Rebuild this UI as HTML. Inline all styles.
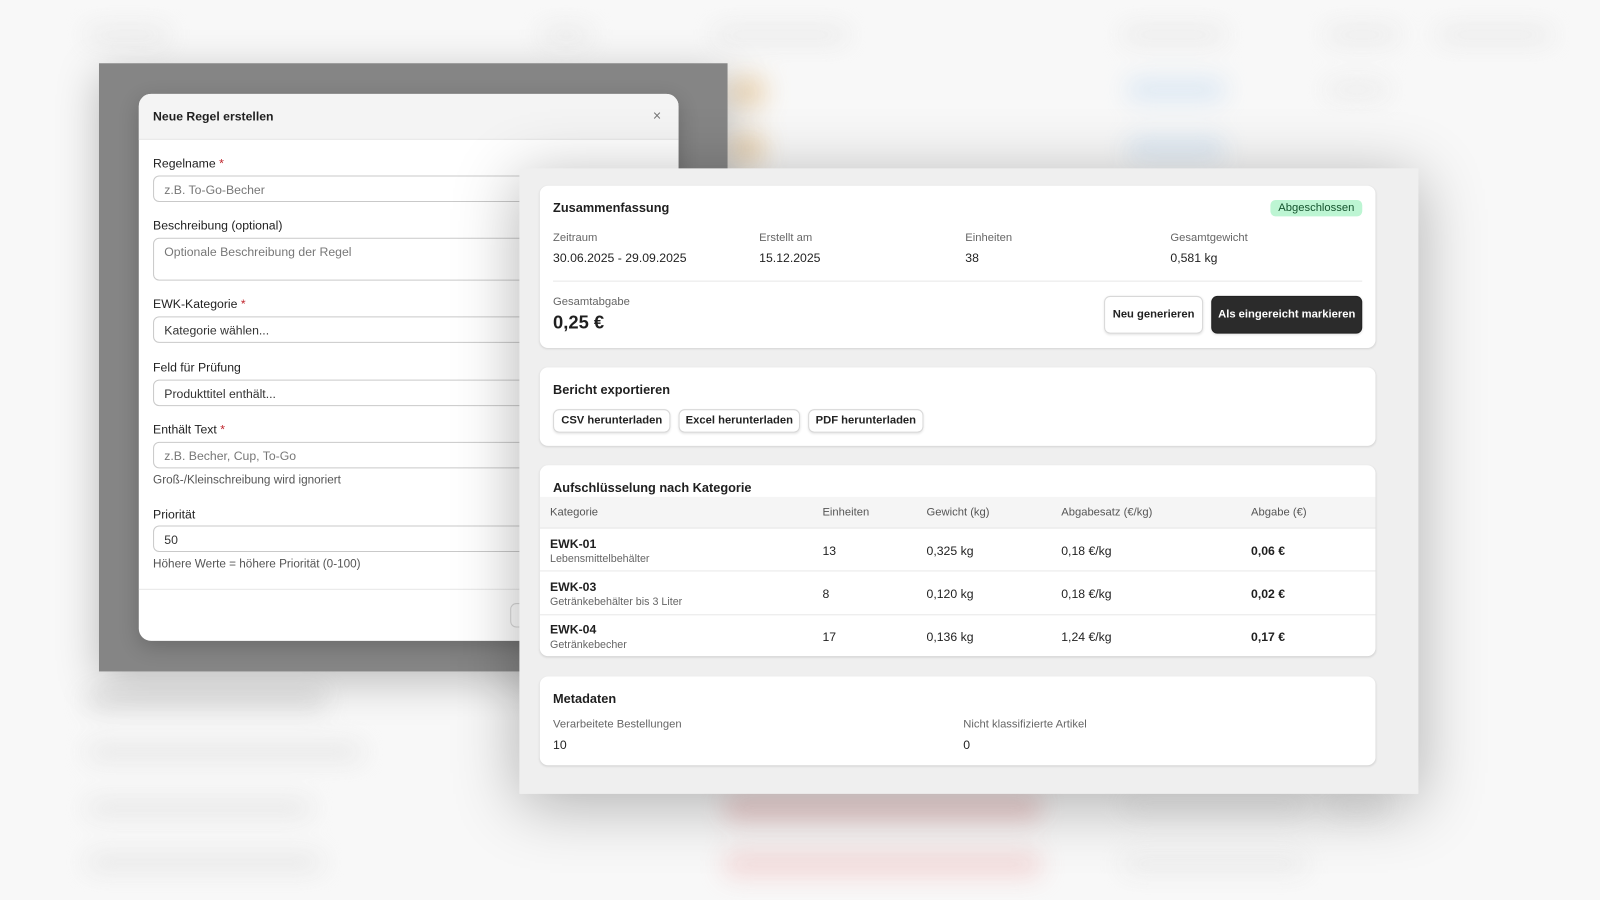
<!DOCTYPE html>
<html><head><meta charset="utf-8"><style>
*{box-sizing:border-box;margin:0;padding:0}
html,body{width:1600px;height:900px;overflow:hidden;background:#f8f8f8;font-family:"Liberation Sans",sans-serif;color:#1f1f1f}
#s{position:absolute;left:0;top:0;width:1568px;height:882px;transform:scale(1.02041);transform-origin:0 0}
.bg{position:absolute;inset:0;filter:blur(12px);opacity:.85}
.b{position:absolute;border-radius:6px}
.abs{position:absolute}
.ov{position:absolute;left:97px;top:62px;width:616px;height:596px;background:#858585;box-shadow:0 10px 40px rgba(0,0,0,.25)}
.modal{position:absolute;left:136px;top:92px;width:529px;height:536px;background:#fff;border-radius:12px;overflow:hidden;box-shadow:0 6px 20px rgba(0,0,0,.2)}
.mh{height:45px;background:#f4f4f4;border-bottom:1px solid #e6e6e6;padding:15px 14px;font-size:12px;font-weight:bold}
.x{position:absolute;right:17px;top:13px;font-size:14px;color:#777}
.lbl{position:absolute;left:14px;font-size:12px;color:#222}
.lbl i{color:#c0262d;font-style:normal}
.inp{position:absolute;left:14px;width:501px;height:26px;border:1px solid #c9c9c9;border-radius:6px;padding:6px 10px;font-size:12px;color:#333}
.ph{color:#777}
.hint{position:absolute;left:14px;font-size:11.5px;color:#555}
.panel{position:absolute;left:509px;top:165px;width:881px;height:613px;background:#efefef;box-shadow:0 10px 60px rgba(0,0,0,.3)}
.card{position:absolute;left:20px;width:819px;background:#fff;border-radius:8px;box-shadow:0 1px 2px rgba(0,0,0,.12)}
.t{position:absolute;font-size:12.5px;font-weight:bold;color:#1f1f1f}
.sl{position:absolute;font-size:11px;color:#666}
.sv{position:absolute;font-size:12px;color:#222}
.btn{position:absolute;border:1px solid #d8d8d8;border-radius:6px;background:#fff;font-size:11px;font-weight:bold;color:#222;text-align:center;box-shadow:0 1px 2px rgba(0,0,0,.1)}
</style></head><body><div id="s">
<div class="bg">
<div class="b" style="left:85px;top:28px;width:80px;height:12px;background:#e2e2e2"></div>
<div class="b" style="left:530px;top:28px;width:50px;height:12px;background:#e2e2e2"></div>
<div class="b" style="left:700px;top:28px;width:130px;height:12px;background:#e2e2e2"></div>
<div class="b" style="left:1100px;top:28px;width:100px;height:12px;background:#e2e2e2"></div>
<div class="b" style="left:1300px;top:28px;width:70px;height:12px;background:#e2e2e2"></div>
<div class="b" style="left:1410px;top:28px;width:110px;height:12px;background:#e2e2e2"></div>
<div class="b" style="left:715px;top:75px;width:35px;height:30px;background:#ecd2ac"></div>
<div class="b" style="left:715px;top:130px;width:35px;height:30px;background:#ecd2ac"></div>
<div class="b" style="left:1105px;top:78px;width:95px;height:20px;background:#d3e3f2"></div>
<div class="b" style="left:1105px;top:135px;width:95px;height:20px;background:#d3e3f2"></div>
<div class="b" style="left:1300px;top:82px;width:60px;height:12px;background:#e4e4e4"></div>
<div class="b" style="left:85px;top:678px;width:235px;height:16px;background:#d2d2d2"></div>
<div class="b" style="left:85px;top:730px;width:270px;height:14px;background:#e0e0e0"></div>
<div class="b" style="left:85px;top:785px;width:220px;height:14px;background:#e0e0e0"></div>
<div class="b" style="left:85px;top:838px;width:230px;height:14px;background:#e0e0e0"></div>
<div class="b" style="left:710px;top:780px;width:310px;height:24px;background:#ecc6c6"></div>
<div class="b" style="left:710px;top:835px;width:310px;height:24px;background:#f2d2d2"></div>
<div class="b" style="left:1100px;top:785px;width:180px;height:14px;background:#e6e6e6"></div>
<div class="b" style="left:1300px;top:785px;width:60px;height:14px;background:#e6e6e6"></div>
<div class="b" style="left:1100px;top:840px;width:180px;height:14px;background:#e6e6e6"></div>
</div>
<div class="ov"></div>
<div class="modal">
<div class="mh">Neue Regel erstellen</div><div class="x">×</div>
<div class="lbl" style="top:61px">Regelname <i>*</i></div>
<div class="inp" style="top:80px"><span class="ph">z.B. To-Go-Becher</span></div>
<div class="lbl" style="top:122px">Beschreibung (optional)</div>
<div class="inp" style="top:141px;height:42px"><span class="ph">Optionale Beschreibung der Regel</span></div>
<div class="lbl" style="top:199px">EWK-Kategorie <i>*</i></div>
<div class="inp" style="top:218px">Kategorie wählen...</div>
<div class="lbl" style="top:261px">Feld für Prüfung</div>
<div class="inp" style="top:280px">Produkttitel enthält...</div>
<div class="lbl" style="top:322px">Enthält Text <i>*</i></div>
<div class="inp" style="top:341px"><span class="ph">z.B. Becher, Cup, To-Go</span></div>
<div class="hint" style="top:373px">Groß-/Kleinschreibung wird ignoriert</div>
<div class="lbl" style="top:405px">Priorität</div>
<div class="inp" style="top:423px">50</div>
<div class="hint" style="top:455px">Höhere Werte = höhere Priorität (0-100)</div>
<div class="abs" style="left:0;top:485px;width:529px;border-top:1px solid #e6e6e6"></div>
<div class="abs" style="left:364px;top:499px;width:80px;height:24px;border:1px solid #d8d8d8;border-radius:6px"></div>
</div>
<div class="panel">
<div class="card" style="top:17px;height:159px">
<div class="t" style="left:13px;top:15px">Zusammenfassung</div>
<div class="abs" style="left:716px;top:14px;width:90px;height:16px;background:#bdf5d3;border-radius:5px;font-size:11px;color:#14532d;text-align:center;line-height:16px">Abgeschlossen</div>
<div class="sl" style="left:13px;top:45px">Zeitraum</div><div class="sv" style="left:13px;top:64px">30.06.2025 - 29.09.2025</div>
<div class="sl" style="left:215px;top:45px">Erstellt am</div><div class="sv" style="left:215px;top:64px">15.12.2025</div>
<div class="sl" style="left:417px;top:45px">Einheiten</div><div class="sv" style="left:417px;top:64px">38</div>
<div class="sl" style="left:618px;top:45px">Gesamtgewicht</div><div class="sv" style="left:618px;top:64px">0,581 kg</div>
<div class="abs" style="left:13px;top:93px;width:793px;border-top:1px solid #e8e8e8"></div>
<div class="sl" style="left:13px;top:108px">Gesamtabgabe</div>
<div class="abs" style="left:13px;top:124px;font-size:18px;font-weight:bold">0,25 €</div>
<div class="btn" style="left:553px;top:108px;width:97px;height:37px;line-height:35px">Neu generieren</div>
<div class="btn" style="left:658px;top:108px;width:148px;height:37px;line-height:35px;background:#2b2b2b;color:#fff;border-color:#222">Als eingereicht markieren</div>
</div>
<div class="card" style="top:195px;height:77px">
<div class="t" style="left:13px;top:15px">Bericht exportieren</div>
<div class="btn" style="left:13px;top:41px;width:115px;height:23px;line-height:21px">CSV herunterladen</div>
<div class="btn" style="left:136px;top:41px;width:119px;height:23px;line-height:21px">Excel herunterladen</div>
<div class="btn" style="left:263px;top:41px;width:113px;height:23px;line-height:21px">PDF herunterladen</div>
</div>
<div class="card" style="top:291px;height:187px;overflow:hidden">
<div class="t" style="left:13px;top:15px">Aufschlüsselung nach Kategorie</div>
<div class="abs" style="left:0;top:31px;width:819px;height:31px;background:#f5f5f5;border-bottom:1px solid #e5e5e5;font-size:11px;color:#555">
<span class="abs" style="left:10px;top:9px">Kategorie</span><span class="abs" style="left:277px;top:9px">Einheiten</span><span class="abs" style="left:379px;top:9px">Gewicht (kg)</span><span class="abs" style="left:511px;top:9px">Abgabesatz (€/kg)</span><span class="abs" style="left:697px;top:9px">Abgabe (€)</span></div>
<div class="abs" style="left:0;top:62px;width:819px;height:42px;border-bottom:1px solid #e8e8e8;font-size:12px">
<b class="abs" style="left:10px;top:8px">EWK-01</b><span class="abs" style="left:10px;top:24px;font-size:10.5px;color:#666">Lebensmittelbehälter</span><span class="abs" style="left:277px;top:15px">13</span><span class="abs" style="left:379px;top:15px">0,325 kg</span><span class="abs" style="left:511px;top:15px">0,18 €/kg</span><b class="abs" style="left:697px;top:15px">0,06 €</b></div>
<div class="abs" style="left:0;top:105px;width:819px;height:42px;border-bottom:1px solid #e8e8e8;font-size:12px">
<b class="abs" style="left:10px;top:7px">EWK-03</b><span class="abs" style="left:10px;top:23px;font-size:10.5px;color:#666">Getränkebehälter bis 3 Liter</span><span class="abs" style="left:277px;top:14px">8</span><span class="abs" style="left:379px;top:14px">0,120 kg</span><span class="abs" style="left:511px;top:14px">0,18 €/kg</span><b class="abs" style="left:697px;top:14px">0,02 €</b></div>
<div class="abs" style="left:0;top:147px;width:819px;height:40px;font-size:12px">
<b class="abs" style="left:10px;top:7px">EWK-04</b><span class="abs" style="left:10px;top:23px;font-size:10.5px;color:#666">Getränkebecher</span><span class="abs" style="left:277px;top:14px">17</span><span class="abs" style="left:379px;top:14px">0,136 kg</span><span class="abs" style="left:511px;top:14px">1,24 €/kg</span><b class="abs" style="left:697px;top:14px">0,17 €</b></div>
</div>
<div class="card" style="top:498px;height:87px">
<div class="t" style="left:13px;top:15px">Metadaten</div>
<div class="sl" style="left:13px;top:41px">Verarbeitete Bestellungen</div><div class="sv" style="left:13px;top:60px">10</div>
<div class="sl" style="left:415px;top:41px">Nicht klassifizierte Artikel</div><div class="sv" style="left:415px;top:60px">0</div>
</div>
</div>
</div></body></html>
